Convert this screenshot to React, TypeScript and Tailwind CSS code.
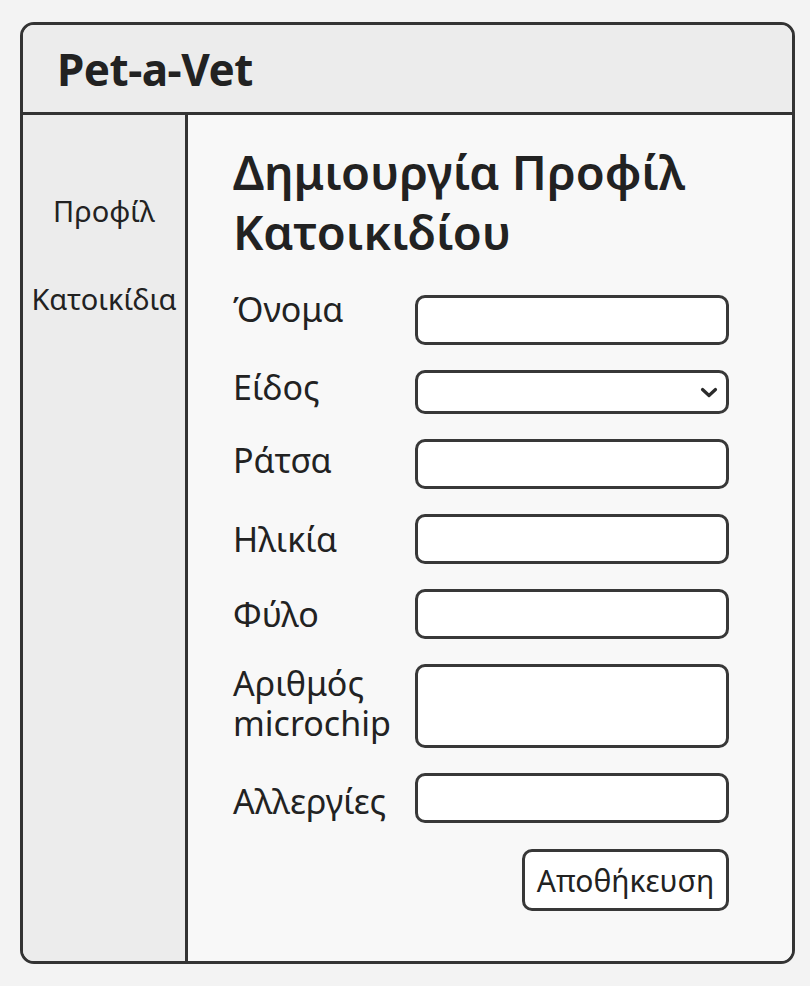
import React from "react";

const font = { fontFamily: '"Noto Sans", "Open Sans", "DejaVu Sans", sans-serif' };

type Field = { label: string[]; kind: "input" | "select" | "area"; h: string; shift: string };

// shift nudges the label against its box, the way the mockup has them
const fields: Field[] = [
  { label: ["Όνομα"], kind: "input", h: "h-[50px]", shift: "-translate-y-[11px]" },
  { label: ["Είδος"], kind: "select", h: "h-[44px]", shift: "-translate-y-[5px]" },
  { label: ["Ράτσα"], kind: "input", h: "h-[50px]", shift: "-translate-y-[4px]" },
  { label: ["Ηλικία"], kind: "input", h: "h-[50px]", shift: "" },
  { label: ["Φύλο"], kind: "input", h: "h-[50px]", shift: "" },
  { label: ["Αριθμός", "microchip"], kind: "area", h: "h-[84px]", shift: "-translate-y-[3px]" },
  { label: ["Αλλεργίες"], kind: "input", h: "h-[50px]", shift: "translate-y-[3px]" },
];

function Chevron() {
  return (
    <svg width="18" height="11" viewBox="0 0 18 11" className="mr-[8px]">
      <polyline
        points="2.5,2.5 9,8.5 15.5,2.5"
        fill="none"
        stroke="#2b2b2b"
        strokeWidth="3.2"
        strokeLinecap="round"
        strokeLinejoin="round"
      />
    </svg>
  );
}

function Row({ f }: { f: Field }) {
  return (
    <div className="flex items-center">
      <div className={`w-[182px] text-[34px] leading-[40px] text-[#222] ${f.shift}`}>
        {f.label.map((l) => (
          <div key={l}>{l}</div>
        ))}
      </div>
      <div
        className={`flex w-[314px] items-center justify-end rounded-[10px] border-[3px] border-[#383838] bg-white ${f.h}`}
      >
        {f.kind === "select" && <Chevron />}
      </div>
    </div>
  );
}

export default function App() {
  return (
    <div className="min-h-[986px] bg-[#f3f3f3] pl-[20px] pt-[22px]" style={font}>
      <div className="flex h-[942px] w-[775px] flex-col overflow-hidden rounded-[14px] border-[3px] border-[#333]">
        <header className="flex h-[90px] shrink-0 items-center border-b-[3px] border-[#333] bg-[#ececec] pl-[34px]">
          <h1 className="text-[44px] font-bold tracking-[-0.5px] text-[#222]">Pet-a-Vet</h1>
        </header>
        <div className="flex flex-1">
          <aside className="flex w-[165px] shrink-0 flex-col items-center gap-[48px] border-r-[3px] border-[#333] bg-[#ececec] pt-[76px] text-[29px] leading-[40px] text-[#222]">
            <div>Προφίλ</div>
            <div>Κατοικίδια</div>
          </aside>
          <main className="flex-1 bg-[#f8f8f8] pl-[45px] pt-[27px]">
            <h2 className="text-[47px] font-semibold leading-[60px] text-[#222]">
              Δημιουργία Προφίλ
              <br />
              Κατοικιδίου
            </h2>
            <div className="mt-[33px] flex flex-col gap-[25px]">
              {fields.map((f) => (
                <Row key={f.label[0]} f={f} />
              ))}
            </div>
            <div className="mt-[26px] flex w-[496px] justify-end">
              <button className="h-[62px] w-[207px] rounded-[10px] border-[3px] border-[#383838] bg-white text-[30px] text-[#222]">
                Αποθήκευση
              </button>
            </div>
          </main>
        </div>
      </div>
    </div>
  );
}
